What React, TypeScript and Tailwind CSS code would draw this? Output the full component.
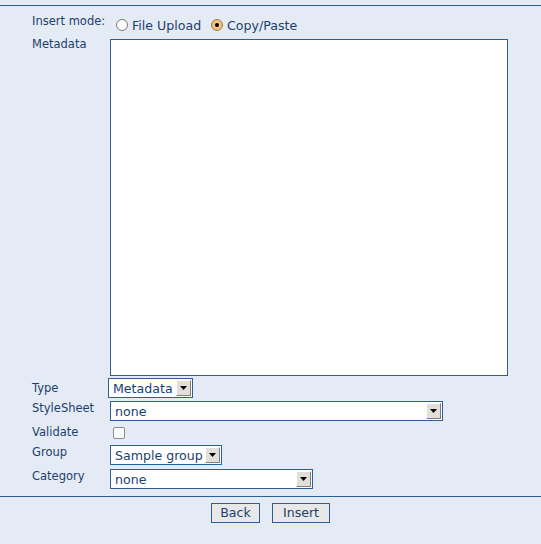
import React from "react";

function Arrow() {
  return (
    <div className="w-[15px] h-[16px] my-[1px] mr-[1px] bg-[#e2dfda] border-t border-l border-t-white border-l-white border-r border-b border-r-[#7f7f7f] border-b-[#7f7f7f] flex items-center justify-center">
      <svg width="7" height="5" viewBox="0 0 7 5">
        <path d="M0 0 H7 L3.5 4 Z" fill="#000" />
      </svg>
    </div>
  );
}

function Select({ width, text }: { width: string; text: string }) {
  return (
    <div className={`${width} h-[20px] bg-white border border-[#2d5f95] flex items-center justify-between`}>
      <span className="pl-[4px] mt-[2px] text-[12.6px] leading-[16px] text-[#1d3f6e] whitespace-nowrap">{text}</span>
      <Arrow />
    </div>
  );
}

function Radio({ checked }: { checked?: boolean }) {
  return checked ? (
    <div className="w-[12px] h-[12px] rounded-full border border-[#9a7a4a] bg-[#f3c37f] flex items-center justify-center">
      <div className="w-[4px] h-[4px] rounded-full bg-black" />
    </div>
  ) : (
    <div className="w-[12px] h-[12px] rounded-full border border-[#7a7a7a] bg-white" />
  );
}

const label = "w-[76px] text-[11.5px] leading-[13px]";

export default function App() {
  return (
    <div className="w-[541px] h-[544px] bg-[#e4ebf4] text-[#1d3f6e] font-['DejaVu_Sans',sans-serif] overflow-hidden">
      <div className="h-[5px]" />
      <div className="border-t border-[#2d5f95]" />
      <div className="pl-[32px] pt-[9px]">
        {/* Insert mode */}
        <div className="flex h-[24px]">
          <div className={label}>Insert mode:</div>
          <div className="flex h-[20px] items-center ml-[8px]">
            <div className="w-[95px] flex items-center">
              <Radio />
              <span className="ml-[4px] text-[12.6px] leading-[16px] mt-[2px]">File Upload</span>
            </div>
            <div className="flex items-center">
              <Radio checked />
              <span className="ml-[4px] text-[12.6px] leading-[16px] mt-[2px]">Copy/Paste</span>
            </div>
          </div>
        </div>
        {/* Metadata */}
        <div className="flex">
          <div className={`${label} -mt-[1px]`}>Metadata</div>
          <div className="ml-[2px] w-[398px] h-[337px] bg-white border border-[#2d5f95]" />
        </div>
        {/* Type */}
        <div className="flex mt-[2px]">
          <div className={`${label} pt-[4px]`}>Type</div>
          <Select width="w-[85px]" text="Metadata" />
        </div>
        {/* StyleSheet */}
        <div className="flex mt-[3px]">
          <div className={`${label} pt-[1px]`}>StyleSheet</div>
          <div className="ml-[2px]">
            <Select width="w-[333px]" text="none" />
          </div>
        </div>
        {/* Validate */}
        <div className="flex h-[24px]">
          <div className={`${label} pt-[5px]`}>Validate</div>
          <div className="ml-[5px] mt-[6px] w-[12px] h-[12px] rounded-[2px] border border-[#8a8a8a] bg-[#fbfbfb]" />
        </div>
        {/* Group */}
        <div className="flex">
          <div className={`${label} pt-[1px]`}>Group</div>
          <div className="ml-[2px]">
            <Select width="w-[112px]" text="Sample group" />
          </div>
        </div>
        {/* Category */}
        <div className="flex mt-[4px]">
          <div className={`${label} pt-[1px]`}>Category</div>
          <div className="ml-[2px]">
            <Select width="w-[203px]" text="none" />
          </div>
        </div>
      </div>
      <div className="mt-[7px] border-t border-[#2d5f95]" />
      <div className="flex justify-center gap-[12px] mt-[6px]">
        <button className="w-[49px] h-[20px] bg-[#e8e8e8] border border-[#2d5f95] text-[12.6px] leading-[16px] text-[#1d3f6e] font-['DejaVu_Sans',sans-serif]">
          Back
        </button>
        <button className="w-[58px] h-[20px] bg-[#e8e8e8] border border-[#2d5f95] text-[12.6px] leading-[16px] text-[#1d3f6e] font-['DejaVu_Sans',sans-serif]">
          Insert
        </button>
      </div>
    </div>
  );
}
